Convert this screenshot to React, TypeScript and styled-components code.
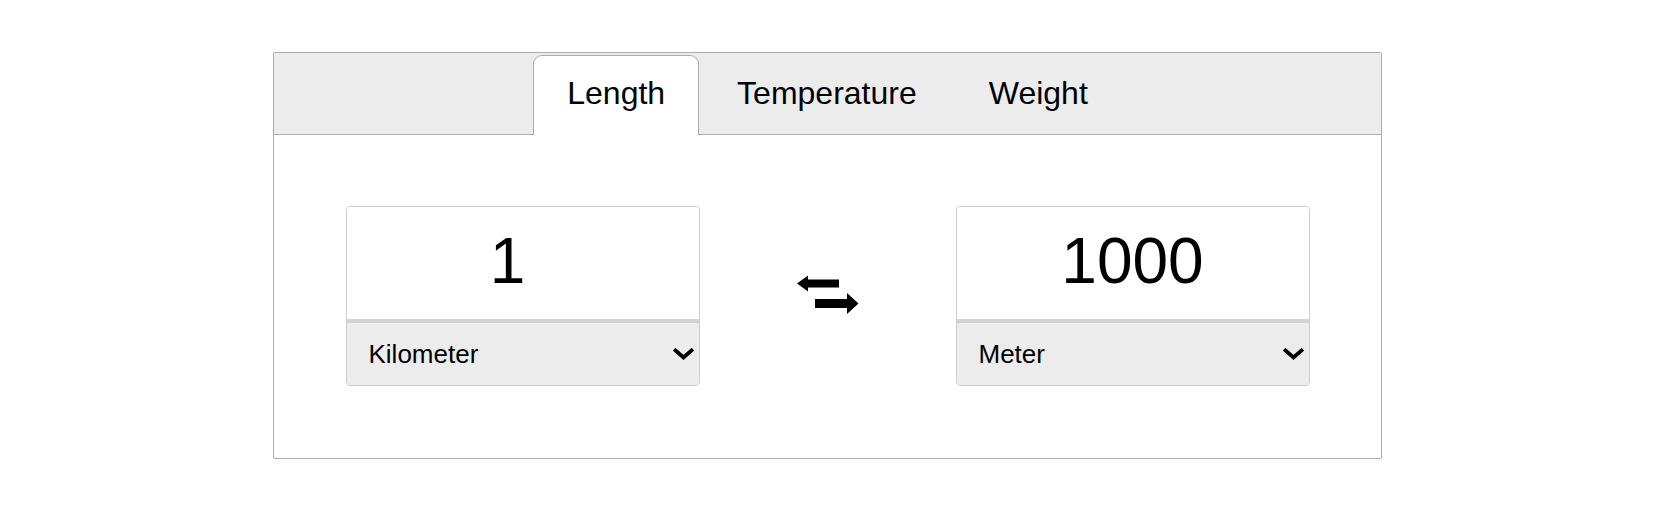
import React, { useState } from "react";
import styled, { createGlobalStyle } from "styled-components";

const GlobalStyle = createGlobalStyle`
  html, body {
    margin: 0;
    padding: 0;
    background: #ffffff;
  }
  body {
    font-family: "Liberation Sans", Arial, Helvetica, sans-serif;
    color: #000000;
  }
  * { box-sizing: border-box; }
`;

const Page = styled.div`
  display: flex;
  justify-content: center;
  padding-top: 52px;
`;

const Panel = styled.div`
  width: 1109px;
  border: 1px solid #adadad;
  border-radius: 2px;
  background: #ffffff;
`;

const TabBar = styled.div`
  display: flex;
  justify-content: center;
  align-items: flex-end;
  gap: 4px;
  padding-top: 2px;
  background: #ececec;
  border-bottom: 1px solid #adadad;
`;

const Tab = styled.button<{ $active?: boolean }>`
  height: 80px;
  margin-bottom: -1px;
  padding: 0 33px 5px;
  display: flex;
  align-items: center;
  font-family: inherit;
  font-size: 32px;
  color: #000000;
  cursor: pointer;
  border: 1px solid ${(p) => (p.$active ? "#adadad" : "transparent")};
  border-bottom: none;
  border-radius: 9px 9px 0 0;
  background: ${(p) => (p.$active ? "#ffffff" : "transparent")};
`;

const Body = styled.div`
  display: flex;
  justify-content: center;
  align-items: center;
  gap: 97px;
  padding: 71px 0 72px;
`;

const Card = styled.div`
  width: 354px;
  display: flex;
  flex-direction: column;
  border: 1px solid #cccccc;
  border-radius: 4px;
  overflow: hidden;
`;

const ValueInput = styled.input<{ $shift?: number }>`
  height: 116px;
  width: 100%;
  border: none;
  border-bottom: 4px solid #d3d3d3;
  outline: none;
  text-align: center;
  font-family: inherit;
  font-size: 64px;
  color: #000000;
  background: #ffffff;
  padding: 0 ${(p) => p.$shift ?? 0}px 4px 0;
`;

const SelectWrap = styled.div`
  position: relative;
  height: 62px;
`;

const UnitSelect = styled.select`
  appearance: none;
  -webkit-appearance: none;
  width: 100%;
  height: 100%;
  border: none;
  outline: none;
  background: #ececec;
  font-family: inherit;
  font-size: 26px;
  color: #000000;
  padding: 0 40px 0 22px;
  cursor: pointer;
`;

const Chevron = styled.svg`
  position: absolute;
  right: 5px;
  top: 50%;
  margin-top: -6px;
  pointer-events: none;
`;

const SwapIcon = styled.svg`
  display: block;
  margin-bottom: 3px;
  cursor: pointer;
`;

const ChevronDown = () => (
  <Chevron width="21" height="12" viewBox="0 0 21 12">
    <polyline
      points="2.5,2.5 10.5,9.5 18.5,2.5"
      fill="none"
      stroke="#000"
      strokeWidth="3.8"
      strokeLinecap="square"
      strokeLinejoin="miter"
    />
  </Chevron>
);

const Converter = ({
  value,
  unit,
  units,
  shift,
}: {
  value: string;
  unit: string;
  units: string[];
  shift?: number;
}) => (
  <Card>
    <ValueInput type="text" defaultValue={value} $shift={shift} />
    <SelectWrap>
      <UnitSelect defaultValue={unit}>
        {units.map((u) => (
          <option key={u} value={u}>
            {u}
          </option>
        ))}
      </UnitSelect>
      <ChevronDown />
    </SelectWrap>
  </Card>
);

const units = ["Kilometer", "Meter", "Centimeter", "Millimeter", "Mile", "Yard", "Foot", "Inch"];

export default function App() {
  const [tab, setTab] = useState("Length");
  const tabs = ["Length", "Temperature", "Weight"];
  return (
    <>
      <GlobalStyle />
      <Page>
        <Panel>
          <TabBar>
            {tabs.map((t) => (
              <Tab key={t} $active={t === tab} onClick={() => setTab(t)}>
                {t}
              </Tab>
            ))}
          </TabBar>
          <Body>
            <Converter value="1" unit="Kilometer" units={units} shift={30} />
            <SwapIcon width="62" height="38" viewBox="0 0 62 38">
              <polygon
                points="0,7.5 11,-0.5 11,3.5 42,3.5 42,11.5 11,11.5 11,15.5"
                fill="#000"
              />
              <polygon
                points="18,23 50,23 50,17 61.5,27.5 50,38 50,32 18,32"
                fill="#000"
              />
            </SwapIcon>
            <Converter value="1000" unit="Meter" units={units} />
          </Body>
        </Panel>
      </Page>
    </>
  );
}
